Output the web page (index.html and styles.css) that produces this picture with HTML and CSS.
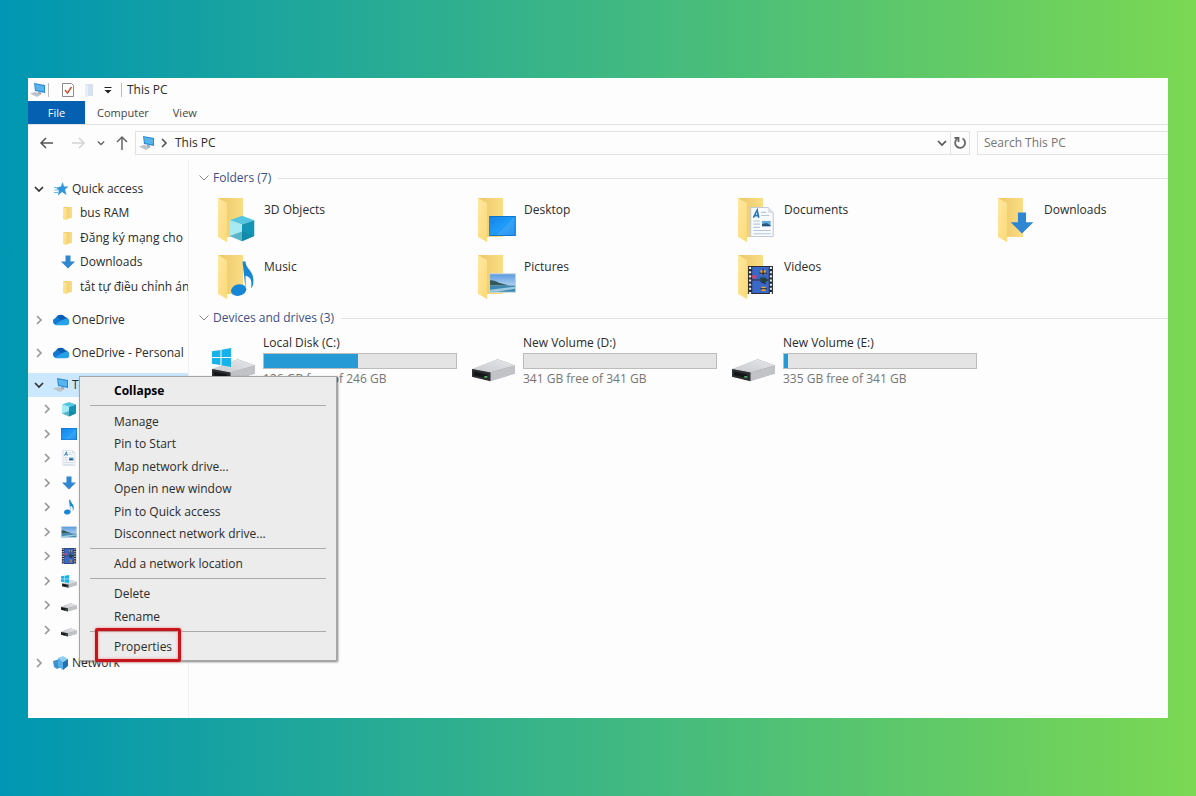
FILE: index.html
```html
<!DOCTYPE html>
<html lang="en">
<head>
  <meta charset="UTF-8" />
  <meta name="viewport" content="width=device-width, initial-scale=1.0" />
  <title>This PC</title>
  <link rel="stylesheet" href="styles.css">
</head>
<body>
  <!-- shared icons -->
  <svg class="sprite" aria-hidden="true">
    <defs>
      <linearGradient id="flap" x1="0" y1="0" x2="1" y2="1">
        <stop offset="0" stop-color="#ffe8a0" />
        <stop offset="1" stop-color="#fbd977" />
      </linearGradient>
      <linearGradient id="back" x1="0" y1="0" x2="1" y2="0">
        <stop offset="0" stop-color="#ecc768" />
        <stop offset="1" stop-color="#fadd85" />
      </linearGradient>
      <linearGradient id="screen" x1="0" y1="0" x2="1" y2="1">
        <stop offset="0" stop-color="#1683e6" />
        <stop offset="0.5" stop-color="#1f9bf8" />
        <stop offset="1" stop-color="#0d84ec" />
      </linearGradient>
      <linearGradient id="sky" x1="0" y1="0" x2="0" y2="1">
        <stop offset="0" stop-color="#5c9ce0" />
        <stop offset="1" stop-color="#dcebf7" />
      </linearGradient>
      <linearGradient id="driveTop" x1="0" y1="1" x2="1" y2="0">
        <stop offset="0" stop-color="#c9cacd" />
        <stop offset="1" stop-color="#e6e7ea" />
      </linearGradient>
    </defs>

    <symbol id="chevron-down" viewBox="0 0 10 10"><path d="M1 3l4 4 4-4" fill="none" stroke="currentColor" stroke-width="1.7" /></symbol>
    <symbol id="chevron-thin" viewBox="0 0 10 10"><path d="M.5 2.500l4.500 4.500 4.500-4.500" fill="none" stroke="currentColor" /></symbol>
    <symbol id="chevron-right" viewBox="0 0 10 10"><path d="M3 1l4 4-4 4" fill="none" stroke="currentColor" stroke-width="1.7" /></symbol>

    <symbol id="folder-small" viewBox="0 0 16 16">
      <path d="M3 2h9v11l-5 1z" fill="url(#back)" />
      <path d="M3 2l4 2v11l-4-1z" fill="url(#flap)" />
    </symbol>
    <symbol id="star" viewBox="0 0 16 16">
      <path d="M9.500 1l1.500 4.500h4.500l-3.500 3 1.500 5.500-4.500-3-4 3.500.8-5L3 6.500l5-1z" fill="#2f96dc" />
      <path d="M1 6.500h5M1.500 9h4M1 11.500h4" stroke="#6bb7e8" />
    </symbol>
    <symbol id="arrow" viewBox="0 0 16 16"><path d="M5.500 1.500h5v6H15l-7 7-7-7h4.500z" fill="#2f86d2" /></symbol>
    <symbol id="cloud" viewBox="1 1 16 12">
      <path d="M4 12a3.600 3.600 0 0 1-.5-7A5.500 5.500 0 0 1 13 4a4.500 4.500 0 0 1 4 5z" fill="#1478d0" />
      <path d="M5 3.500A5.500 5.500 0 0 1 13 4l1.500 2-5 2z" fill="#0b5db3" />
      <path d="M3 11.500L10 7l4-1.500a3.300 3.300 0 0 1 0 6.700H4z" fill="#27a0ea" />
    </symbol>
    <symbol id="pc" viewBox="0 0 16 16">
      <path d="M4 1l11 2v8L5 9z" fill="#2d8bd0" />
      <path d="M5 2.200l9 1.700v5.600L6 8z" fill="#58b4ec" />
      <path d="M0 11.500l5-1.500 7 2-5 3z" fill="#bcc3c9" />
      <path d="M8 10l3 .6v1.600l-3-1z" fill="#8fa3b3" />
    </symbol>
    <symbol id="cube" viewBox="0 0 16 16">
      <path d="M1 3.500L8 1l7 2.500L8 6z" fill="#54c6e2" />
      <path d="M1 3.500L8 6v9.500l-7-3z" fill="#a6eaf3" />
      <path d="M15 3.500L8 6v9.500l7-3z" fill="#1494b7" />
      <path d="M1 12.500L8 10v5.500zM15 12.500L8 10v5.500z" fill="#0f7f9e" opacity=".5" />
    </symbol>
    <symbol id="desktop" viewBox="0 0 16 12">
      <path d="M0 0h16v12H0z" fill="#0b70c9" />
      <path d="M.5.5h15v11H.5z" fill="url(#screen)" />
      <path d="M4 11.500L15 1v10.500z" fill="#fff" opacity=".12" />
    </symbol>
    <symbol id="document" viewBox="0 0 22 28">
      <path d="M.5.500h16l5 5v22H.5z" fill="#f8fafc" stroke="#c2cbd4" />
      <path d="M16.500.5v5h5z" fill="#dbe2e8" />
      <path d="M10 5h5M10 8h8M3 13h6M3 16h6M3 19h6M3 22h16M3 25h16" stroke="#b5c7d9" />
      <path d="M3 10L6.500 3 8 10M4.500 8H8" fill="none" stroke="#2878bd" stroke-width="1.500" />
      <path d="M11 13h8v5h-8z" fill="#64a9dc" />
      <path d="M11 16l4-1 4 2v1h-8z" fill="#28577d" />
    </symbol>
    <symbol id="note" viewBox="0 0 16 24">
      <path d="M8 1h2c0 5 6 6 5 14-.3 2-1 3-1.500 3 1-5-.5-7-3.500-8v9z" fill="#1587d6" />
      <ellipse cx="5.500" cy="19.500" rx="5" ry="3.700" fill="#1587d6" transform="rotate(-14 5.500 19.500)" />
    </symbol>
    <symbol id="picture" viewBox="0 0 26 19">
      <path d="M.5.500h25v18H.5z" fill="#fff" stroke="#c7d0d8" />
      <path d="M1 1h24v17H1z" fill="url(#sky)" />
      <path d="M1 7c4-1 7 2 11 3l8 2H1z" fill="#34595a" />
      <path d="M1 12h24v6H1z" fill="#3d87b0" />
      <path d="M1 16l24-3v2L8 18H1z" fill="#9fcbe0" />
    </symbol>
    <symbol id="film" viewBox="0 0 24 27">
      <path d="M0 0h24v27H0z" fill="#2b2c33" />
      <path d="M4 1h16v12H4zM4 14h16v12H4z" fill="#3a68c8" />
      <path d="M2 1v26M22 1v26" stroke="#eceff2" stroke-width="2" stroke-dasharray="2 2" />
      <path d="M4 9h4v3H4z" fill="#d8436b" />
      <path d="M12 4h5v4h-5zM13 20h4v4h-4z" fill="#e8a832" />
      <path d="M14.500 3v6M11 7h7M12 15l5 2M12 22h6" stroke="#1b1f38" />
      <path d="M11 11h6l2 3-4 3-2-3z" fill="#23433a" />
    </symbol>
    <symbol id="drive" viewBox="0 0 42 22">
      <path d="M0 10L25 0l17 6v8L18 21 0 17z" fill="#8c8d91" />
      <path d="M0 9.500L25 0l17 6-24 7z" fill="url(#driveTop)" />
      <path d="M18 13l24-7v8l-24 7.500z" fill="#c2c3c7" />
      <path d="M0 9.500L18 13v8.500L0 17z" fill="#2c2e31" />
      <path d="M2 12l13 3v3.500L2 16z" fill="#141517" />
      <path d="M12 16.500h3v1.500h-3z" fill="#54c46a" />
    </symbol>
    <symbol id="winlogo" viewBox="0 0 18 18">
      <path d="M0 3l8-1.200V8.500H0zM9 1.600L18 0v8.500H9zM0 9.500h8v6.700L0 15zM9 9.500h9V18l-9-1.600z" fill="#17b1ec" />
    </symbol>
    <symbol id="system-drive-small" viewBox="0 0 16 16">
      <use href="#drive" x="1" y="7" width="15" height="8" />
      <use href="#winlogo" x="0" y="2" width="8" height="8" />
    </symbol>
    <symbol id="drive-small" viewBox="0 0 16 16"><use href="#drive" x="0" y="6" width="16" height="9" /></symbol>
    <symbol id="network" viewBox="0 0 16 16">
      <path d="M0 6l7-2 1 8-4 2-3-2z" fill="#3f92d2" />
      <path d="M5 3l5-2 5 3-5 3z" fill="#8fd0f2" />
      <path d="M5 3l5 4v8l-5-4z" fill="#57aee3" />
      <path d="M10 7l5-3v7l-5 4z" fill="#2173b5" />
    </symbol>
    <symbol id="folder" viewBox="0 0 48 48">
      <path d="M6 2h25v39H10z" fill="url(#back)" />
      <path d="M6 2l9 5v39l-9-5z" fill="url(#flap)" />
    </symbol>
  </svg>

  <div class="window">
    <header>
      <div class="titlebar">
        <svg class="icon"><use href="#pc" /></svg>
        <span class="divider"></span>
        <button class="quick" aria-label="Properties">
          <svg class="icon" viewBox="0 0 16 16"><path d="M2.500 1.500h9l2 2v11h-11z" fill="#fff" stroke="#8b8b8b" /><path d="M5 8l2.500 3L11.500 5" fill="none" stroke="#c8562f" stroke-width="1.500" /></svg>
        </button>
        <button class="quick" aria-label="New folder">
          <svg class="icon" viewBox="0 0 16 16"><path d="M4 2h8v12H4z" fill="#d7e2f0" /><path d="M4 2l3 1v12l-3-1z" fill="#e6edf6" /></svg>
        </button>
        <button class="quick small" aria-label="Customize">
          <svg class="chevron" viewBox="0 0 10 10"><path d="M1.500 2.500h7" stroke="#222" /><path d="M1.500 5h7L5 8.500z" fill="#222" /></svg>
        </button>
        <span class="divider"></span>
        <span class="title">This PC</span>
      </div>
      <nav class="tabs">
        <button class="tab file">File</button>
        <button class="tab">Computer</button>
        <button class="tab">View</button>
      </nav>
      <div class="toolbar">
        <button class="nav" aria-label="Back"><svg class="icon" viewBox="0 0 16 16"><path d="M14 8H2M7 3L2 8l5 5" fill="none" stroke="#555" stroke-width="1.500" /></svg></button>
        <button class="nav" aria-label="Forward"><svg class="icon" viewBox="0 0 16 16"><path d="M2 8h12M9 3l5 5-5 5" fill="none" stroke="#d2d2d2" stroke-width="1.500" /></svg></button>
        <button class="nav recent" aria-label="Recent locations"><svg class="chevron small"><use href="#chevron-down" /></svg></button>
        <button class="nav up" aria-label="Up"><svg class="icon" viewBox="0 0 16 16"><path d="M8 15V2M3 7l5-5 5 5" fill="none" stroke="#666" stroke-width="1.500" /></svg></button>
        <div class="address">
          <svg class="icon"><use href="#pc" /></svg>
          <svg class="chevron"><use href="#chevron-right" /></svg>
          <a href="#" class="crumb">This PC</a>
          <button class="history" aria-label="Previous locations"><svg class="chevron"><use href="#chevron-down" /></svg></button>
          <button class="refresh" aria-label="Refresh"><svg class="icon" viewBox="0 0 16 16"><path d="M10.500 3.500a5 5 0 1 1-5.500.500M2.500 3h4v4" fill="none" stroke="#666" stroke-width="1.800" /></svg></button>
        </div>
        <input class="search" type="text" placeholder="Search This PC" aria-label="Search This PC">
      </div>
    </header>

    <div class="content">
      <aside class="sidebar">
        <a href="#" class="row open"><svg class="chevron"><use href="#chevron-down" /></svg><svg class="icon"><use href="#star" /></svg>Quick access</a>
        <ul class="pinned">
          <li><a href="#"><svg class="icon"><use href="#folder-small" /></svg>bus RAM</a></li>
          <li><a href="#"><svg class="icon"><use href="#folder-small" /></svg>Đăng ký mạng cho</a></li>
          <li><a href="#"><svg class="icon"><use href="#arrow" /></svg>Downloads</a></li>
          <li><a href="#"><svg class="icon"><use href="#folder-small" /></svg>tắt tự điều chỉnh ánh</a></li>
        </ul>
        <a href="#" class="row"><svg class="chevron"><use href="#chevron-right" /></svg><svg class="icon"><use href="#cloud" /></svg>OneDrive</a>
        <a href="#" class="row"><svg class="chevron"><use href="#chevron-right" /></svg><svg class="icon"><use href="#cloud" /></svg>OneDrive - Personal</a>
        <a href="#" class="row open selected"><svg class="chevron"><use href="#chevron-down" /></svg><svg class="icon"><use href="#pc" /></svg>This PC</a>
        <ul class="tree">
          <li><a href="#" aria-label="3D Objects"><svg class="chevron"><use href="#chevron-right" /></svg><svg class="icon"><use href="#cube" /></svg></a></li>
          <li><a href="#" aria-label="Desktop"><svg class="chevron"><use href="#chevron-right" /></svg><svg class="icon"><use href="#desktop" /></svg></a></li>
          <li><a href="#" aria-label="Documents"><svg class="chevron"><use href="#chevron-right" /></svg><svg class="icon"><use href="#document" /></svg></a></li>
          <li><a href="#" aria-label="Downloads"><svg class="chevron"><use href="#chevron-right" /></svg><svg class="icon"><use href="#arrow" /></svg></a></li>
          <li><a href="#" aria-label="Music"><svg class="chevron"><use href="#chevron-right" /></svg><svg class="icon"><use href="#note" /></svg></a></li>
          <li><a href="#" aria-label="Pictures"><svg class="chevron"><use href="#chevron-right" /></svg><svg class="icon"><use href="#picture" /></svg></a></li>
          <li><a href="#" aria-label="Videos"><svg class="chevron"><use href="#chevron-right" /></svg><svg class="icon"><use href="#film" /></svg></a></li>
          <li><a href="#" aria-label="Local Disk (C:)"><svg class="chevron"><use href="#chevron-right" /></svg><svg class="icon"><use href="#system-drive-small" /></svg></a></li>
          <li><a href="#" aria-label="New Volume (D:)"><svg class="chevron"><use href="#chevron-right" /></svg><svg class="icon"><use href="#drive-small" /></svg></a></li>
          <li><a href="#" aria-label="New Volume (E:)"><svg class="chevron"><use href="#chevron-right" /></svg><svg class="icon"><use href="#drive-small" /></svg></a></li>
        </ul>
        <a href="#" class="row"><svg class="chevron"><use href="#chevron-right" /></svg><svg class="icon"><use href="#network" /></svg>Network</a>
      </aside>

      <main>
        <h2><svg class="chevron"><use href="#chevron-thin" /></svg>Folders (7)</h2>
        <div class="grid folders">
          <a href="#" class="tile"><svg class="big"><use href="#folder" /><use href="#cube" x="16" y="18" width="28" height="28" /></svg>3D Objects</a>
          <a href="#" class="tile"><svg class="big"><use href="#folder" /><use href="#desktop" x="17" y="20" width="27" height="20" /></svg>Desktop</a>
          <a href="#" class="tile"><svg class="big"><use href="#folder" /><use href="#document" x="18" y="11" width="24" height="30" /></svg>Documents</a>
          <a href="#" class="tile"><svg class="big"><use href="#folder" /><use href="#arrow" x="17" y="14" width="26" height="26" /></svg>Downloads</a>
          <a href="#" class="tile"><svg class="big"><use href="#folder" /><use href="#note" x="18" y="7" width="25" height="37" /></svg>Music</a>
          <a href="#" class="tile"><svg class="big"><use href="#folder" /><use href="#picture" x="17" y="20" width="27" height="20" /></svg>Pictures</a>
          <a href="#" class="tile"><svg class="big"><use href="#folder" /><use href="#film" x="15" y="13" width="27" height="28" /></svg>Videos</a>
        </div>

        <h2><svg class="chevron"><use href="#chevron-thin" /></svg>Devices and drives (3)</h2>
        <div class="grid drives">
          <a href="#" class="drive">
            <svg class="big"><use href="#drive" x="0" y="24" width="43" height="23" /><use href="#winlogo" x="0" y="13" width="19" height="19" /></svg>
            <span class="info">
              <span>Local Disk (C:)</span>
              <span class="bar"><span class="used" style="width: 49%"></span></span>
              <span class="free">126 GB free of 246 GB</span>
            </span>
          </a>
          <a href="#" class="drive">
            <svg class="big"><use href="#drive" x="0" y="24" width="43" height="23" /></svg>
            <span class="info">
              <span>New Volume (D:)</span>
              <span class="bar"><span class="used" style="width: 0%"></span></span>
              <span class="free">341 GB free of 341 GB</span>
            </span>
          </a>
          <a href="#" class="drive">
            <svg class="big"><use href="#drive" x="0" y="24" width="43" height="23" /></svg>
            <span class="info">
              <span>New Volume (E:)</span>
              <span class="bar"><span class="used" style="width: 2%"></span></span>
              <span class="free">335 GB free of 341 GB</span>
            </span>
          </a>
        </div>
      </main>
    </div>

    <ul class="menu">
      <li><button class="default">Collapse</button></li>
      <li class="separator"></li>
      <li><button>Manage</button></li>
      <li><button>Pin to Start</button></li>
      <li><button>Map network drive...</button></li>
      <li><button>Open in new window</button></li>
      <li><button>Pin to Quick access</button></li>
      <li><button>Disconnect network drive...</button></li>
      <li class="separator"></li>
      <li><button>Add a network location</button></li>
      <li class="separator"></li>
      <li><button>Delete</button></li>
      <li><button>Rename</button></li>
      <li class="separator"></li>
      <li class="marked"><button>Properties</button></li>
    </ul>
  </div>
</body>
</html>
```

FILE: styles.css
```css
:root {
  --window: #fdfdfd;
  --text: #2b2b2b;
  --muted: #757575;
  --line: #e2e2e2;
  --heading: #3c4f86;
  --blue: #259ad4;
}

*,
*::after {
  box-sizing: border-box;
}

body {
  margin: 0;
  min-height: 100vh;
  padding: 78px 28px;
  background: linear-gradient(90deg, #0096b3, #7bd853);
  font-family: "Open Sans", "Noto Sans", sans-serif;
  font-size: 12px;
  line-height: 16px;
  color: var(--text);
  display: flex;
}

a {
  color: inherit;
  text-decoration: none;
}

ul {
  list-style: none;
  margin: 0;
  padding: 0;
}

button {
  border: none;
  background: none;
  padding: 0;
  font: inherit;
  color: inherit;
}

.sprite {
  position: absolute;
  width: 0;
  height: 0;
}

.icon {
  display: block;
  width: 16px;
  height: 16px;
  flex: none;
}

.chevron {
  display: block;
  width: 10px;
  height: 10px;
  flex: none;
}

.chevron.small {
  width: 8px;
  height: 8px;
}

.window {
  position: relative;
  flex: 1;
  min-width: 0;
  background: var(--window);
  display: flex;
  flex-direction: column;
}

/* top of the window */
.titlebar {
  display: flex;
  align-items: center;
  height: 23px;
  padding-left: 2px;
}

.divider {
  width: 1px;
  height: 14px;
  background: #bbb;
  margin: 0 2px;
}

.quick {
  margin-left: 9px;
}

.quick + .quick {
  margin-left: 5px;
}

.quick + .quick.small {
  margin: 0 6px;
}

.title {
  margin-left: 3px;
}

.tabs {
  display: flex;
  height: 24px;
  border-bottom: 1px solid var(--line);
}

.tab {
  padding: 0 12px;
  font-size: 11px;
  color: #444;
}

.tab.file {
  width: 57px;
  background: #0560b2;
  color: #fff;
}

.toolbar {
  display: flex;
  align-items: center;
  height: 35px;
}

.nav {
  margin-left: 11px;
}

.nav + .nav {
  margin-left: 15px;
}

.nav.recent {
  color: #666;
}

.nav + .nav.recent {
  margin-left: 11px;
}

.nav + .nav.up {
  margin: 0 5px 0 9px;
}

.address {
  flex: 1;
  display: flex;
  align-items: center;
  height: 24px;
  border: 1px solid var(--line);
  padding-left: 3px;
  color: #555;
}

.address > .chevron {
  margin: 0 6px 0 4px;
}

.crumb {
  flex: 1;
  color: var(--text);
}

.history {
  margin-right: 3px;
}

.refresh {
  height: 22px;
  border-left: 1px solid var(--line);
  padding: 0 1px;
}

.search {
  width: 191px;
  height: 24px;
  margin-left: 7px;
  border: 1px solid var(--line);
  border-right: none;
  padding: 0 6px;
  background: var(--window);
  font: inherit;
}

.search::placeholder {
  color: var(--muted);
}

/* navigation pane */
.content {
  flex: 1;
  display: flex;
  min-width: 0;
}

.sidebar {
  width: 161px;
  flex: none;
  padding-top: 16px;
  border-right: 1px solid #f1f1f1;
  overflow: hidden;
  white-space: nowrap;
}

.row {
  display: flex;
  align-items: center;
  gap: 3px;
  height: 25px;
  margin-bottom: 8px;
  padding-left: 6px;
}

.row .chevron,
.tree .chevron {
  color: #999;
  margin-right: 6px;
}

.row.open {
  margin-bottom: 0;
}

.row.open .chevron {
  color: #333;
}

.row.selected {
  height: 24px;
  background: #cce8ff;
}

.pinned,
.tree {
  margin-bottom: 8px;
}

.pinned a,
.tree a {
  display: flex;
  align-items: center;
  gap: 4px;
  height: 24px;
  padding-left: 32px;
}

.pinned li:nth-child(even) a,
.tree li:nth-child(even) a {
  height: 25px;
}

.tree a {
  padding-left: 14px;
}

.tree .chevron {
  margin-right: 5px;
}

/* folders and drives */
main {
  flex: 1;
  min-width: 0;
  padding-top: 10px;
  overflow: hidden;
}

h2 {
  display: flex;
  align-items: center;
  gap: 4px;
  margin: 0;
  padding-left: 10px;
  font-size: 12px;
  font-weight: 400;
  color: var(--heading);
}

h2 .chevron {
  color: #888;
}

h2::after {
  content: "";
  flex: 1;
  height: 1px;
  margin-left: 3px;
  background: var(--line);
}

.grid {
  display: grid;
  grid-template-columns: repeat(4, 260px);
  padding-left: 23px;
}

.folders {
  grid-auto-rows: 57px;
  padding-top: 10px;
}

.big {
  width: 48px;
  height: 48px;
  flex: none;
}

.tile {
  display: flex;
  gap: 4px;
  line-height: 28px;
}

.drive {
  display: flex;
  gap: 3px;
  padding-top: 9px;
}

.info {
  width: 194px;
  display: flex;
  flex-direction: column;
  gap: 2px;
}

.bar {
  height: 16px;
  border: 1px solid #bcbcbc;
  background: #e4e4e4;
}

.used {
  display: block;
  height: 100%;
  background: var(--blue);
}

.free {
  color: var(--muted);
}

/* context menu */
.menu {
  position: absolute;
  left: 51px;
  top: 298px;
  width: 258px;
  padding: 2px 0 3px;
  background: #ececec;
  border: 1px solid #a5a5a5;
  box-shadow: 1px 1px 2px rgba(0, 0, 0, 0.5);
}

.menu button {
  display: block;
  width: 100%;
  height: 22px;
  padding-left: 34px;
  text-align: left;
}

.menu li:nth-child(odd) button {
  height: 23px;
}

.menu li.marked button {
  height: 21px;
}

.menu .default {
  font-weight: 700;
  color: #000;
}

.separator {
  height: 1px;
  margin: 3px 10px 4px;
  background: #ababab;
}

.marked {
  position: relative;
}

.marked::after {
  content: "";
  position: absolute;
  left: 15px;
  top: -8px;
  width: 86px;
  height: 34px;
  border: 3px solid #c4161c;
  border-radius: 2px;
  box-shadow: 0 0 3px #e88, inset 0 0 3px #e88;
}
```
